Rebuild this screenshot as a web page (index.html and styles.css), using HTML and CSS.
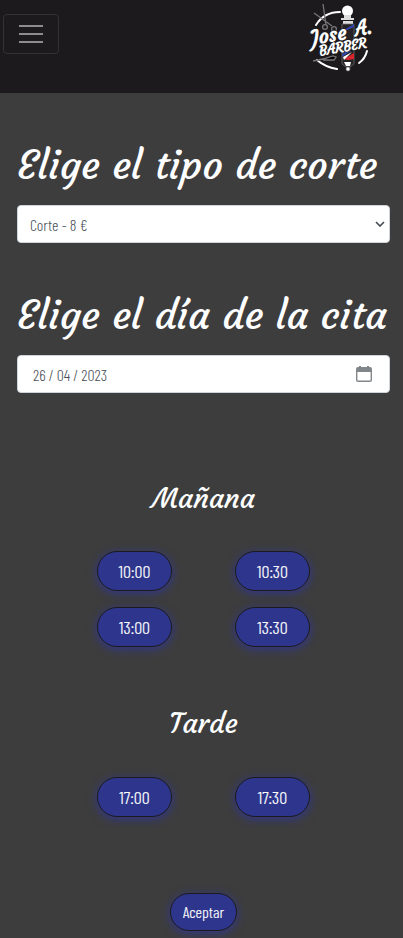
FILE: index.html
```
<!DOCTYPE html>
<html lang="es">
<head>
<meta charset="utf-8">
<title>Jose A. Barber</title>
<link rel="stylesheet" href="styles.css">
</head>
<body>
<header class="navbar">
  <button class="toggler" aria-label="Menú"><i></i><i></i><i></i></button>
  <svg class="logo" viewBox="0 0 74 74" role="img">
    <g fill="none" stroke="#fff" stroke-width="2" stroke-linecap="round">
      <path d="M15 25Q23 12 39 12M16 60Q24 67 36 69M66 51Q64 59 58 63"/>
    </g>
    <g fill="none" stroke="#777578" stroke-width="1.3">
      <path d="M22 4L25 25M13 13L31 26"/><circle cx="24" cy="27" r="2.4"/><circle cx="33" cy="29" r="2.4"/>
      <path d="M12 61L22 59L32 56L35 57L33 60L22 60" fill="#000"/>
    </g>
    <circle cx="46.500" cy="11" r="5.500" fill="#fff"/>
    <path d="M43 15h7v3h-7zM40 18h13v2H40zM42 21h10v3H42z" fill="#ddd"/>
    <path d="M41 24h12v40l-4 3h-4l-4-3z" fill="#242224" stroke="#777" stroke-width=".7"/>
    <path d="M41 31L53 24V27L44 31zM41 54L46 51H50L41 57z" fill="#2f43a8"/>
    <path d="M43 59L53 53V59L47 60z" fill="#d9252b"/>
    <path d="M42 57L51 52L43 60zM43 62h7l-1 4h-4z" fill="#fff"/>
    <circle cx="47" cy="69" r="2" fill="#fff" stroke="#777" stroke-width=".6"/>
    <g transform="rotate(-10 40 37)" class="logo-text">
      <text x="10" y="40" font-size="20" textLength="36" lengthAdjust="spacingAndGlyphs">Jose</text>
      <text x="55" y="39" font-size="21" textLength="17" lengthAdjust="spacingAndGlyphs">A.</text>
      <text x="16" y="52" font-size="14" textLength="48" lengthAdjust="spacingAndGlyphs">BARBER</text>
    </g>
  </svg>
</header>
<main class="booking">
  <h1 class="title">Elige el tipo de corte</h1>
  <div class="field">
    <span>Corte - 8 €</span>
    <svg class="chevron" viewBox="0 0 10 6"><path d="M1 1L5 5L9 1"/></svg>
  </div>
  <h1 class="title second">Elige el día de la cita</h1>
  <div class="field date">
    <span>26 / 04 / 2023</span>
    <svg class="calendar" viewBox="0 0 16 16"><path d="M2 1h1V0h2v1h6V0h2v1h1a2 2 0 0 1 2 2v11a2 2 0 0 1-2 2H2a2 2 0 0 1-2-2V3a2 2 0 0 1 2-2zM1.400 6v8q0 .6.6.6h12q.6 0 .6-.6V6z" fill-rule="evenodd"/></svg>
  </div>
  <h2 class="period">Mañana</h2>
  <div class="slots">
    <button class="pill">10:00</button>
    <button class="pill">10:30</button>
    <button class="pill">13:00</button>
    <button class="pill">13:30</button>
  </div>
  <h2 class="period evening">Tarde</h2>
  <div class="slots late">
    <button class="pill">17:00</button>
    <button class="pill">17:30</button>
  </div>
  <button class="pill accept">Aceptar</button>
</main>
</body>
</html>
```
FILE: styles.css
```
* { box-sizing: border-box; }
body { margin: 0; height: 938px; overflow: hidden; background: #3d3d3d; color: #fff; font-family: "Barlow Condensed", Roboto, sans-serif; font-weight: 300; }
.navbar { display: flex; justify-content: space-between; align-items: flex-start; height: 93px; padding: 0 28px 0 3px; background: #1c1a1d; }
.toggler { display: flex; flex-direction: column; align-items: center; justify-content: center; gap: 6px; width: 56px; height: 40px; margin-top: 14px; padding: 0 0 1px; border: 1px solid #333134; border-radius: 4px; background: none; }
.toggler i { width: 24px; height: 2px; background: #8e8d8e; }
.logo { width: 74px; height: 74px; }
.logo-text text { font-family: Courgette, Lato, sans-serif; font-weight: 700; fill: #fff; stroke: #1c1a1d; stroke-width: 1.2px; paint-order: stroke; }
.booking { display: flex; flex-direction: column; padding: 48px 13px 0 17px; }
.title, .period { margin: 0; font-family: Courgette, Lato, sans-serif; font-weight: 400; white-space: nowrap; }
.title { height: 48px; font-size: 40px; line-height: 48px; }
.second { margin-top: 48px; }
.field { display: flex; align-items: center; justify-content: space-between; height: 38px; margin-top: 16px; padding: 1px 4px 0 12px; border: 1px solid #ced4da; border-radius: 4px; background: #fff; color: #495057; font-size: 16px; }
.date { padding: 1px 17px 0 15px; letter-spacing: -.07px; }
.chevron { width: 10px; height: 6px; margin-bottom: 1px; fill: none; stroke: #495057; stroke-width: 1.7; }
.calendar { width: 16px; height: 16px; margin-bottom: 1px; fill: #81868a; }
.period { margin-top: 89px; height: 34px; line-height: 34px; font-size: 28px; text-align: center; }
.slots { display: grid; grid-template-columns: 75px 75px; justify-content: center; column-gap: 63px; row-gap: 16px; margin-top: 35px; }
.late { margin-top: 36px; }
.evening { margin-top: 60px; }
.pill { height: 40px; padding: 0; border: 1px solid #1c1a1d; border-radius: 20px; background: #2d358c; color: #fff; font: 300 18px "Barlow Condensed", Roboto, sans-serif; -webkit-text-stroke: .2px #fff; box-shadow: 0 2px 10px rgba(45, 53, 160, .8); }
.accept { align-self: center; width: 67px; height: 38px; margin-top: 76px; padding-bottom: 2px; font-size: 16px; }
```
